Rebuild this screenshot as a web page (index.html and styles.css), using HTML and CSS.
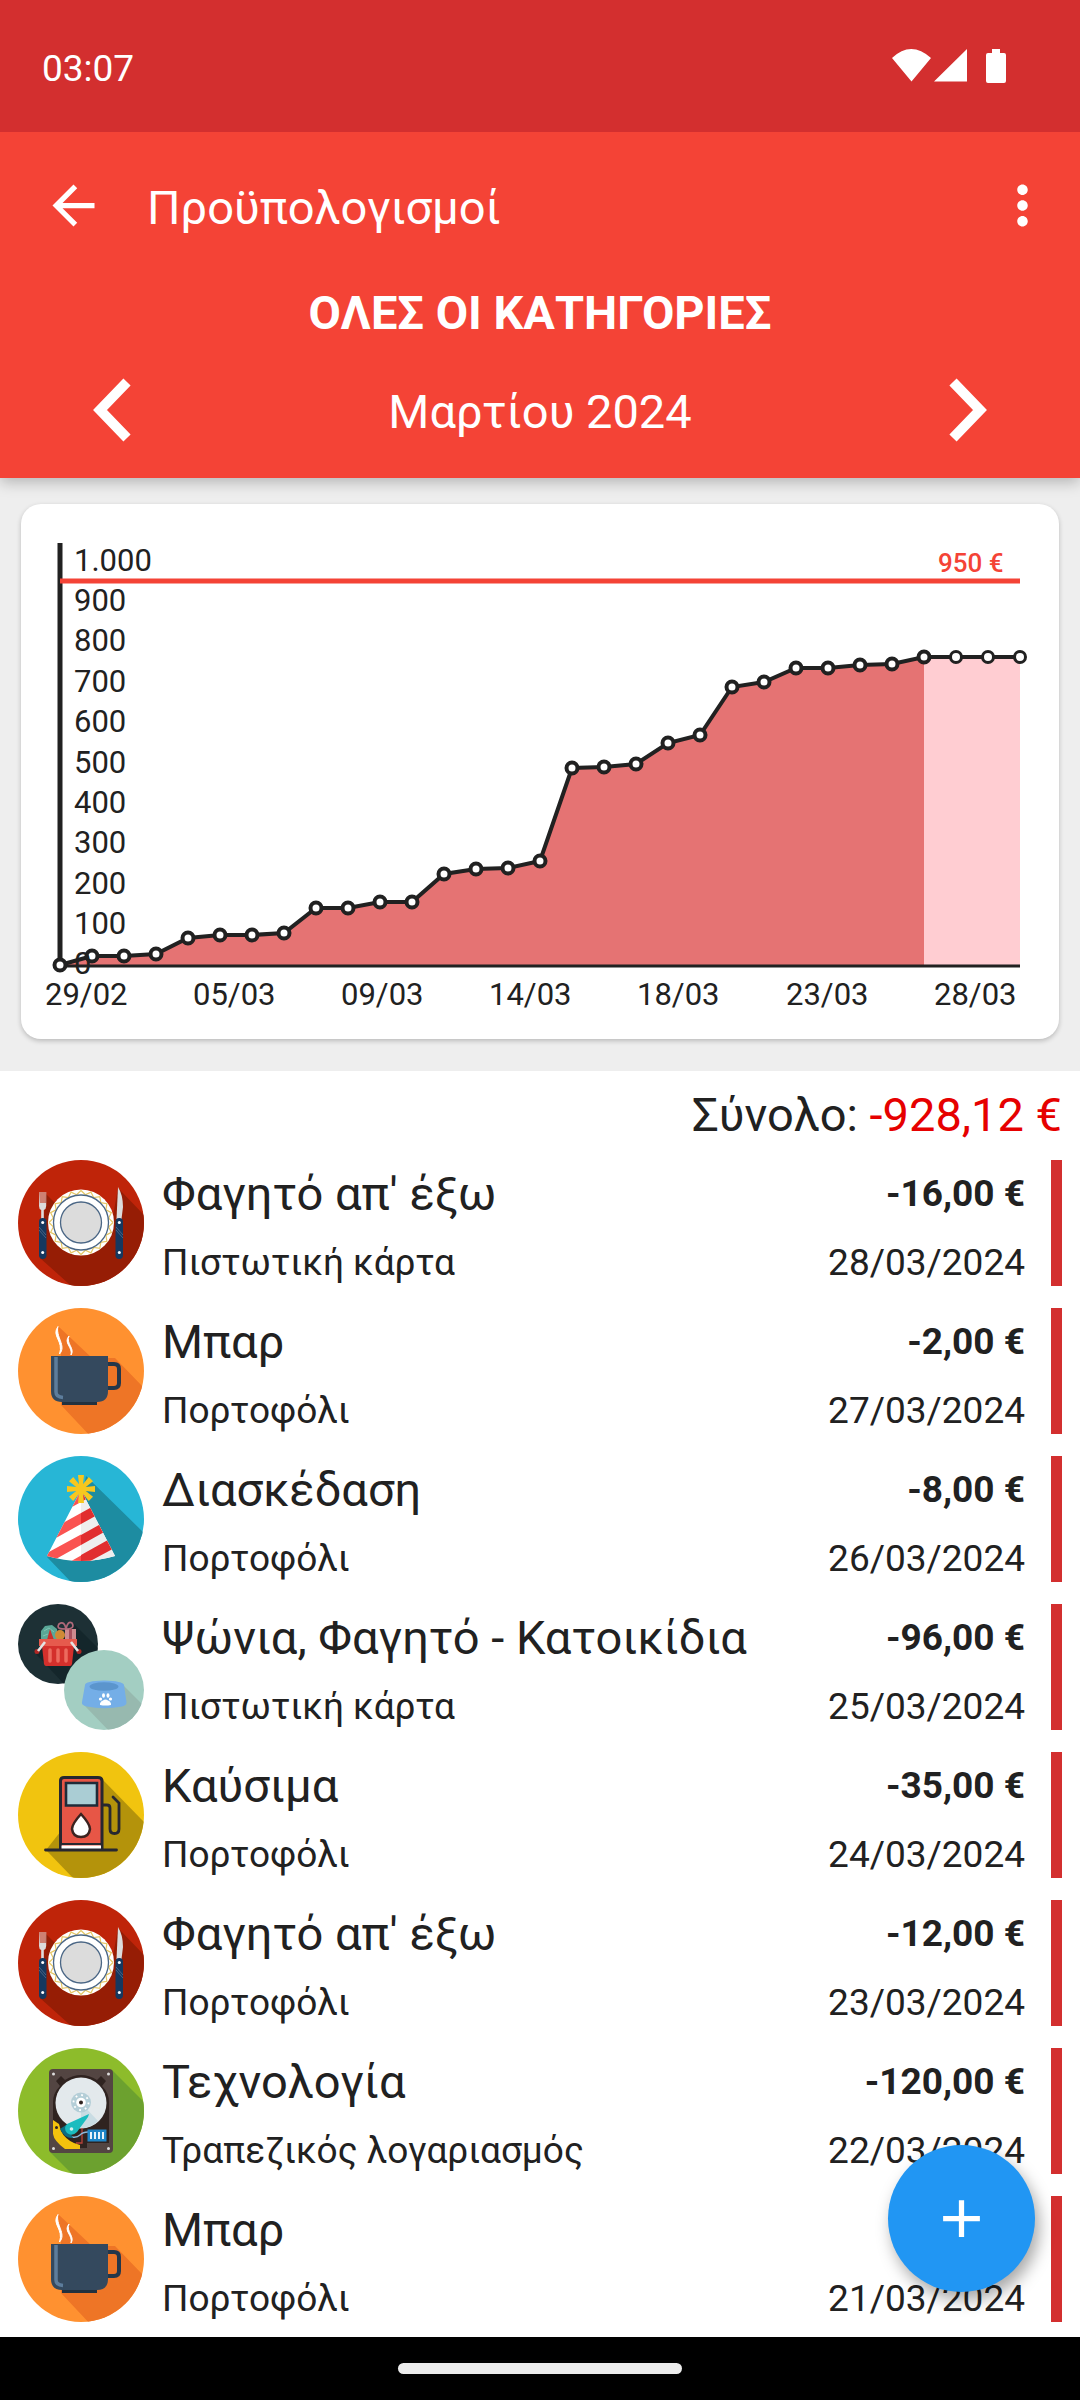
FILE: index.html
```html
<!DOCTYPE html>
<html lang="el">
<head>
<meta charset="UTF-8"/>
<meta name="viewport" content="width=device-width,initial-scale=1.0"/>
<title>Προϋπολογισμοί</title>
<link rel="stylesheet" href="styles.css">
</head>
<body>

<!-- category icons -->
<svg class="sprite" aria-hidden="true">
  <defs>
    <clipPath id="disc"><circle cx="63" cy="63" r="63"/></clipPath>
    <clipPath id="discTop"><circle cx="40" cy="40" r="40"/></clipPath>
    <clipPath id="discBottom"><circle cx="86" cy="86" r="40"/></clipPath>
    <clipPath id="cone"><path d="M63 34 29 100Q63 110 97 100Z"/></clipPath>
    <path id="zigzag" d="M32 0 27.7 4.4 30.4 9.9 24.9 12.7 25.9 18.8 19.8 19.8 18.8 25.9 12.7 24.9 9.9 30.4 4.4 27.7 0 32"/>
    <path id="ray" d="M-1.5 0-3-14H3L1.5 0Z"/>
  </defs>

  <symbol id="food" viewBox="0 0 126 126">
    <g clip-path="url(#disc)">
      <rect width="126" height="126" fill="#bf2409"/>
      <path d="M22 98 28 34 50 56H95L100 28 150 80V150H80Z" fill="#961d05"/>
    </g>
    <circle cx="63" cy="62.5" r="33" fill="#fff"/>
    <g transform="translate(63 62.5)" fill="none" stroke="#e6c766" stroke-width="1.2">
      <use href="#zigzag"/><use href="#zigzag" transform="rotate(90)"/>
      <use href="#zigzag" transform="rotate(180)"/><use href="#zigzag" transform="rotate(270)"/>
    </g>
    <circle cx="63" cy="62.5" r="27.5" fill="#fff" stroke="#4a6685" stroke-width="1.3"/>
    <circle cx="63" cy="62.5" r="20.5" fill="#dcdcdc" stroke="#4a6685" stroke-width="1.3"/>
    <path d="M21.5 32h1v11h1V32h1v11h1V32h1v11h1V32h.7v14q0 3-2.4 4V59h-2.6V50q-2.2-1-2.2-4Z" fill="#dcdcdc"/>
    <path d="M100 27q5 8 5 20l-1.500 12H98.500Z" fill="#dcdcdc"/>
    <rect x="21" y="58" width="7.500" height="41" rx="3.700" fill="#15385f"/>
    <rect x="97.500" y="58" width="7.500" height="41" rx="3.700" fill="#15385f"/>
    <path d="M21 67 28 75M21 70 28 78M98 67 105 75M98 70 105 78" stroke="#55708e" stroke-width=".8"/>
    <g fill="#fff"><circle cx="24.700" cy="62.500" r="1.500"/><circle cx="24.700" cy="92.500" r="1.500"/><circle cx="101.300" cy="62.500" r="1.500"/><circle cx="101.300" cy="92.500" r="1.500"/></g>
  </symbol>

  <symbol id="bar" viewBox="0 0 126 126">
    <g clip-path="url(#disc)">
      <rect width="126" height="126" fill="#ff9130"/>
      <path d="M40 18 74 50H97L130 84V130H74L43 97V44Z" fill="#ee7526"/>
    </g>
    <path d="M40 18.500C33 28 46 33 41.500 46 49 38 37 28 40 18.500ZM51 28C45 35 55 39 53 47 57.500 41 47.500 35 51 28Z" fill="#fff" stroke="#fff"/>
    <path d="M89 56h7q5 0 5 5v14q0 5-5 5h-7" fill="none" stroke="#24374a" stroke-width="4"/>
    <path d="M44 92H79V97H44Z" fill="#22313f"/>
    <path d="M33 48H90V83Q90 94 79 94H44Q33 94 33 83Z" fill="#34495e"/>
    <path d="M38 49V84Q38 89 45 89.500" fill="none" stroke="#5d7d9c" stroke-width="3.500"/>
  </symbol>

  <symbol id="fun" viewBox="0 0 126 126">
    <g clip-path="url(#disc)">
      <rect width="126" height="126" fill="#27b6d6"/>
      <path d="M68 20 126 77V126H53L29 101 60 60Z" fill="#1d8ca1"/>
    </g>
    <g clip-path="url(#cone)">
      <rect x="28" y="30" width="70" height="80" fill="#fff"/>
      <path d="M20 55 106 8V22L20 70ZM20 81 106 33V44L20 92ZM20 102 106 55V65L20 113ZM20 124 106 75V87L20 134Z" fill="#fa5351"/>
      <path d="M63 30H98V110H63Z" fill="#eee"/>
      <path d="M63 31 106 8V22L63 46ZM63 57 106 33V44L63 68ZM63 79 106 55V65L63 89ZM63 99 106 75V87L63 110Z" fill="#e12e2f"/>
    </g>
    <g transform="translate(63 33)" fill="#f7c71f">
      <use href="#ray"/><use href="#ray" transform="rotate(45)"/><use href="#ray" transform="rotate(90)"/><use href="#ray" transform="rotate(135)"/>
      <use href="#ray" transform="rotate(180)"/><use href="#ray" transform="rotate(225)"/><use href="#ray" transform="rotate(270)"/><use href="#ray" transform="rotate(315)"/>
      <circle r="5"/>
    </g>
  </symbol>

  <symbol id="shopping" viewBox="0 0 126 126">
    <g clip-path="url(#discTop)">
      <rect width="80" height="80" fill="#1d3035"/>
      <path d="M56 20 80 44V80H46L18 50Z" fill="#14262b"/>
    </g>
    <path d="M23 35V27l4-5 7-1 5 4v10Z" fill="#5aa797"/>
    <path d="m26 27 5-3 5 4M25 32l5-2" fill="none" stroke="#7fc4b3"/>
    <path d="M32 25 36 36H29Z" fill="#c9302c"/>
    <circle cx="42" cy="31" r="5" fill="#d08a35"/>
    <path d="M47 25H58V36H47Z" fill="#cf8a8f"/>
    <path d="M51 25h3V36h-3Z" fill="#a8505e"/>
    <path d="M48 25C43 25 38 25 41 20 45 17 47 20 48 25 49 20 51 17 54 19 57 24 52 25 48 25Z" fill="none" stroke="#b0697a" stroke-width="1.700"/>
    <path d="M24 42H56L54 60Q53.500 62 52 62H28Q26.500 62 26 60Z" fill="#d4302c"/>
    <path d="M21 35H59V42H21Z" fill="#e65a4d"/>
    <path d="M32 46v11M40 46v11M48 46v11" stroke="#ec6a5e" stroke-width="3.500" stroke-linecap="round"/>
    <circle cx="19" cy="47.500" r="2.500" fill="#b02724"/><circle cx="61" cy="47.500" r="2.500" fill="#b02724"/>
    <path d="M27 38 20 47M53 38 60 47" stroke="#e4e4e4" stroke-width="2.600"/>
    <g clip-path="url(#discBottom)">
      <rect x="46" y="46" width="80" height="80" fill="#a3cec2"/>
      <path d="M104 80 130 106V130H94L66 101Z" fill="#97b9af"/>
    </g>
    <path d="M67 81Q67 77 86 76.500 105 77 106 81L108.500 98Q109 101 104 102.500 86 106 69 102.500 63 101 64 98Z" fill="#74aee7"/>
    <ellipse cx="86" cy="82.500" rx="14.500" ry="4.300" fill="#5b95cd"/>
    <path d="M82 101Q81.500 98 85 96.500 87.500 94.500 90 96.500 93.500 98 93 101 87.500 102 82 101Z" fill="#fff"/>
    <g fill="#fff"><ellipse cx="85.500" cy="91.500" rx="1.500" ry="2.200"/><ellipse cx="90" cy="91.500" rx="1.500" ry="2.200"/><circle cx="82.500" cy="95" r="1.600"/><circle cx="92.500" cy="95" r="1.600"/></g>
  </symbol>

  <symbol id="fuel" viewBox="0 0 126 126">
    <g clip-path="url(#disc)">
      <rect width="126" height="126" fill="#f1c40f"/>
      <path d="M84 27 126 70V126H55L28 98Z" fill="#b4930b"/>
    </g>
    <path d="M42.500 96V29Q42.500 25.500 46 25.500H80Q84 25.500 84 29V96Z" fill="#e75646" stroke="#272730" stroke-width="3"/>
    <path d="M43.500 93.500H83V97H43.500Z" fill="#fff"/>
    <path d="M42 92H84" stroke="#272730" stroke-width="2"/>
    <path d="M48 31H79V53.500H48Z" fill="#aacdd4" stroke="#1f2b38" stroke-width="2.600"/>
    <path d="M63 62Q54 72 54 77 55 85 63 85 71 85 72 77 72 72 63 62Z" fill="#fff" stroke="#3b2320" stroke-width="2.500"/>
    <path d="M27.500 98H98.500M85 53h4q3 0 3 3v21q0 4.500 4.500 4.500 4.500 0 4.500-4.500V51L95 45" fill="none" stroke="#272730" stroke-width="2.800" stroke-linecap="round"/>
  </symbol>

  <symbol id="tech" viewBox="0 0 126 126">
    <g clip-path="url(#disc)">
      <rect width="126" height="126" fill="#8dbc2b"/>
      <path d="M94 22 126 54V126H54L32 104Z" fill="#6ca12f"/>
    </g>
    <rect x="31" y="21" width="64" height="84" rx="4" fill="#534542"/>
    <path d="m38 33 5-5 4 4Q63 22 79 32l4-4 5 5-4 5Q91 45 91 54V95H69V100H48L35 86V54Q35 45 42 38Z" fill="#2f2320"/>
    <circle cx="63" cy="55" r="25.500" fill="#e3e9ec"/>
    <path d="M63 55 80 73Q73 80 63 80.500Z" fill="#c9dce3"/>
    <circle cx="63" cy="54.500" r="10" fill="#b4ced7"/>
    <circle cx="63" cy="54.500" r="7.500" fill="none" stroke="#fff" stroke-width="1.800" stroke-dasharray="1.800 4.090"/>
    <circle cx="63" cy="54.500" r="4.800" fill="#fff"/><circle cx="63" cy="54.500" r="2" fill="#2f2320"/>
    <path d="M64 80V95H58" fill="none" stroke="#b8433b" stroke-width="1.300"/>
    <path d="M54 89q5 1 8-2t8-3" fill="none" stroke="#8bb8dc" stroke-width="1.300"/>
    <path d="M35 72 41 76 43 83Q47 91 56 95L62 97V101H47Q36 93 35 86Z" fill="#f4c20d"/>
    <circle cx="38.500" cy="79.500" r="1.500" fill="#2f2320"/>
    <path d="M42 81 48 77 55 90Q47 91 42 81Z" fill="#0d6d80"/>
    <path d="M49 76 71 66 70 69 59 84Q54 89 49 85 45 80 49 76Z" fill="#1bbcbf"/>
    <circle cx="53.500" cy="81" r="1.800" fill="#d7f2f2"/>
    <rect x="69.500" y="81.500" width="19" height="12" fill="#1e86c8"/>
    <path d="M73 84v7M77 84v7M81 84v7M85 84v7" stroke="#fff" stroke-width="1.800"/>
    <g fill="#ddd"><circle cx="35.500" cy="26" r="1.500"/><circle cx="90.500" cy="26" r="1.500"/><circle cx="35.500" cy="100.500" r="1.500"/><circle cx="90.500" cy="100.500" r="1.500"/></g>
  </symbol>
</svg>

<div class="status-bar">
  <time>03:07</time>
  <svg class="status-icons" viewBox="0 0 114 34" aria-hidden="true">
    <path d="M0 9Q19-9 39 9L19.500 32.500ZM42 32.500 75 0V32.500ZM100 0h8v4h4q2 0 2 2V32q0 2-2 2H96q-2 0-2-2V6q0-2 2-2h4Z"/>
  </svg>
</div>

<header class="header">
  <div class="toolbar">
    <button class="icon-btn" aria-label="Πίσω"><svg viewBox="0 0 24 24"><path d="M20 11H7.830l5.590-5.590L12 4l-8 8 8 8 1.410-1.410L7.830 13H20v-2z"/></svg></button>
    <h1 class="title">Προϋπολογισμοί</h1>
    <button class="icon-btn more" aria-label="Περισσότερα"><svg viewBox="0 0 24 24"><path d="M12 8c1.100 0 2-.9 2-2s-.9-2-2-2-2 .9-2 2 .9 2 2 2zm0 2c-1.100 0-2 .9-2 2s.9 2 2 2 2-.9 2-2-.9-2-2-2zm0 6c-1.100 0-2 .9-2 2s.9 2 2 2 2-.9 2-2-.9-2-2-2z"/></svg></button>
  </div>
  <h2 class="category">ΟΛΕΣ ΟΙ ΚΑΤΗΓΟΡΙΕΣ</h2>
  <div class="period">
    <button class="arrow" aria-label="Προηγούμενος μήνας"><svg viewBox="0 0 40 64"><path d="M35 4 8 32 35 60"/></svg></button>
    <span class="month">Μαρτίου 2024</span>
    <button class="arrow" aria-label="Επόμενος μήνας"><svg viewBox="0 0 40 64"><path d="M5 4 32 32 5 60"/></svg></button>
  </div>
</header>

<section class="chart-section">
  <div class="card">
    <svg class="chart" viewBox="0 0 1038 535" role="img" aria-label="Έξοδα ανά ημέρα">
      <path class="area" d="M39 461 71 452 103 452 135 450 167 434 199 431 231 431 263 429 295 404 327 404 359 398 391 398 423 370 455 365 487 364 519 357 551 264 583 263 615 260 647 239 679 231 711 183 743 178 775 164 807 164 839 161 871 160 903 153V462H39Z"/>
      <path class="area-future" d="M903 153H999V462H903Z"/>
      <path class="axis-x" d="M39 462H999"/>
      <path class="axis-y" d="M39 39V462"/>
      <path class="limit" d="M39 77H999"/>
      <polyline class="line" points="39,461 71,452 103,452 135,450 167,434 199,431 231,431 263,429 295,404 327,404 359,398 391,398 423,370 455,365 487,364 519,357 551,264 583,263 615,260 647,239 679,231 711,183 743,178 775,164 807,164 839,161 871,160 903,153 999,153"/>
      <g class="dots">
        <circle cx="39" cy="461" r="5.500"/><circle cx="71" cy="452" r="5.500"/><circle cx="103" cy="452" r="5.500"/><circle cx="135" cy="450" r="5.500"/>
        <circle cx="167" cy="434" r="5.500"/><circle cx="199" cy="431" r="5.500"/><circle cx="231" cy="431" r="5.500"/><circle cx="263" cy="429" r="5.500"/>
        <circle cx="295" cy="404" r="5.500"/><circle cx="327" cy="404" r="5.500"/><circle cx="359" cy="398" r="5.500"/><circle cx="391" cy="398" r="5.500"/>
        <circle cx="423" cy="370" r="5.500"/><circle cx="455" cy="365" r="5.500"/><circle cx="487" cy="364" r="5.500"/><circle cx="519" cy="357" r="5.500"/>
        <circle cx="551" cy="264" r="5.500"/><circle cx="583" cy="263" r="5.500"/><circle cx="615" cy="260" r="5.500"/><circle cx="647" cy="239" r="5.500"/>
        <circle cx="679" cy="231" r="5.500"/><circle cx="711" cy="183" r="5.500"/><circle cx="743" cy="178" r="5.500"/><circle cx="775" cy="164" r="5.500"/>
        <circle cx="807" cy="164" r="5.500"/><circle cx="839" cy="161" r="5.500"/><circle cx="871" cy="160" r="5.500"/><circle cx="903" cy="153" r="5.500"/>
      </g>
      <g class="dots future"><circle cx="935" cy="153" r="5.500"/><circle cx="967" cy="153" r="5.500"/><circle cx="999" cy="153" r="5.500"/></g>
      <g class="labels">
        <text x="53" y="67">1.000</text><text x="53" y="107">900</text><text x="53" y="147">800</text><text x="53" y="188">700</text>
        <text x="53" y="228">600</text><text x="53" y="269">500</text><text x="53" y="309">400</text><text x="53" y="349">300</text>
        <text x="53" y="390">200</text><text x="53" y="430">100</text><text x="53" y="470">0</text>
        <text x="24" y="501">29/02</text><text x="172" y="501">05/03</text><text x="320" y="501">09/03</text><text x="468" y="501">14/03</text>
        <text x="616" y="501">18/03</text><text x="765" y="501">23/03</text><text x="913" y="501">28/03</text>
      </g>
      <text class="limit-label" x="917" y="68">950 €</text>
    </svg>
  </div>
</section>

<main class="content">
  <p class="total">Σύνολο: <span class="negative">-928,12 €</span></p>
  <ul class="list">
    <li class="item">
      <svg class="icon" aria-hidden="true"><use href="#food"/></svg>
      <div class="main"><span class="name">Φαγητό απ' έξω</span><span class="sub">Πιστωτική κάρτα</span></div>
      <div class="side"><span class="amount">-16,00 €</span><span class="sub">28/03/2024</span></div>
    </li>
    <li class="item">
      <svg class="icon" aria-hidden="true"><use href="#bar"/></svg>
      <div class="main"><span class="name">Μπαρ</span><span class="sub">Πορτοφόλι</span></div>
      <div class="side"><span class="amount">-2,00 €</span><span class="sub">27/03/2024</span></div>
    </li>
    <li class="item">
      <svg class="icon" aria-hidden="true"><use href="#fun"/></svg>
      <div class="main"><span class="name">Διασκέδαση</span><span class="sub">Πορτοφόλι</span></div>
      <div class="side"><span class="amount">-8,00 €</span><span class="sub">26/03/2024</span></div>
    </li>
    <li class="item">
      <svg class="icon" aria-hidden="true"><use href="#shopping"/></svg>
      <div class="main"><span class="name">Ψώνια, Φαγητό - Κατοικίδια</span><span class="sub">Πιστωτική κάρτα</span></div>
      <div class="side"><span class="amount">-96,00 €</span><span class="sub">25/03/2024</span></div>
    </li>
    <li class="item">
      <svg class="icon" aria-hidden="true"><use href="#fuel"/></svg>
      <div class="main"><span class="name">Καύσιμα</span><span class="sub">Πορτοφόλι</span></div>
      <div class="side"><span class="amount">-35,00 €</span><span class="sub">24/03/2024</span></div>
    </li>
    <li class="item">
      <svg class="icon" aria-hidden="true"><use href="#food"/></svg>
      <div class="main"><span class="name">Φαγητό απ' έξω</span><span class="sub">Πορτοφόλι</span></div>
      <div class="side"><span class="amount">-12,00 €</span><span class="sub">23/03/2024</span></div>
    </li>
    <li class="item">
      <svg class="icon" aria-hidden="true"><use href="#tech"/></svg>
      <div class="main"><span class="name">Τεχνολογία</span><span class="sub">Τραπεζικός λογαριασμός</span></div>
      <div class="side"><span class="amount">-120,00 €</span><span class="sub">22/03/2024</span></div>
    </li>
    <li class="item">
      <svg class="icon" aria-hidden="true"><use href="#bar"/></svg>
      <div class="main"><span class="name">Μπαρ</span><span class="sub">Πορτοφόλι</span></div>
      <div class="side"><span class="amount">-2,00 €</span><span class="sub">21/03/2024</span></div>
    </li>
  </ul>
</main>

<button class="fab" aria-label="Προσθήκη"><svg viewBox="0 0 24 24"><path d="M19 13h-6v6h-2v-6H5v-2h6V5h2v6h6v2z"/></svg></button>

<div class="nav-bar"><div class="pill"></div></div>

</body>
</html>
```
FILE: styles.css
```css
*{margin:0;padding:0;box-sizing:border-box}
body{
  min-height:100vh;display:flex;flex-direction:column;
  background:#fff;color:#212121;font-family:Roboto,"Noto Sans",sans-serif
}
button{border:none;background:none;color:inherit;cursor:pointer}
svg{display:block}
.sprite{position:absolute;width:0;height:0}

/* ---------- status bar ---------- */
.status-bar{
  position:relative;z-index:2;
  height:132px;padding:0 74px 0 42px;background:#d32f2f;color:#fff;
  display:flex;align-items:center;justify-content:space-between;font-size:37px
}
.status-bar time{padding-top:4px}
.status-icons{width:114px;height:34px;fill:#fff}

/* ---------- header ---------- */
.header{
  position:relative;z-index:1;background:#f44336;color:#fff;font-size:47px;line-height:56px;
  box-shadow:0 4px 14px rgba(0,0,0,.25)
}
.toolbar{height:147px;display:flex;align-items:center;padding:0 26px 0 42px}
.icon-btn svg{width:63px;height:63px;fill:#fff}
.title{flex:1;padding:4px 0 0 42px;font-size:47px;font-weight:400}
.category{margin-top:6px;font-size:47px;font-weight:700;text-align:center}
.period{height:137px;padding:0 92px;display:flex;align-items:center;justify-content:space-between}
.month{padding-top:4px}
.arrow svg{width:40px;height:64px;fill:none;stroke:#fff;stroke-width:10}

/* ---------- chart ---------- */
.chart-section{padding:26px 21px 32px;background:#eee}
.card{background:#fff;border-radius:20px;box-shadow:0 2px 5px rgba(0,0,0,.22)}
.chart{width:100%;height:auto}
.area{fill:#e57373}
.area-future{fill:#ffcdd2}
.axis-x{stroke:#212121;stroke-width:3}
.axis-y{stroke:#212121;stroke-width:5}
.limit{stroke:#f44336;stroke-width:5}
.line{fill:none;stroke:#212121;stroke-width:4}
.dots{fill:#fff;stroke:#212121;stroke-width:4}
.dots.future{stroke-width:3}
.labels{fill:#212121;font-size:31px}
.limit-label{fill:#f44336;font-size:26px;font-weight:500}

/* ---------- transactions ---------- */
.content{flex:1}
.total{padding:16px 18px 17px;text-align:right;font-size:47px;line-height:56px}
.negative{color:#e60000}
.list{list-style:none;padding:0 18px 15px;display:flex;flex-direction:column;gap:22px}
.item{display:flex;align-items:stretch;gap:18px;border-right:11px solid #d32f2f;padding-right:26px}
.icon{width:126px;height:126px;flex:none}
.main,.side{display:flex;flex-direction:column;justify-content:space-between}
.main{flex:1;padding:6px 0 1px}
.side{padding:12px 0 1px;text-align:right}
.name{font-size:47px;line-height:56px}
.sub,.amount{font-size:37px;line-height:44px}
.amount{font-weight:700}

/* ---------- floating button ---------- */
.fab{
  position:fixed;right:45px;bottom:108px;width:147px;height:147px;border-radius:50%;
  display:flex;align-items:center;justify-content:center;background:#2196f3;
  box-shadow:4px 8px 16px rgba(0,0,0,.35)
}
.fab svg{width:63px;height:63px;fill:#fff}

/* ---------- gesture bar ---------- */
.nav-bar{height:63px;background:#000;display:flex;align-items:center;justify-content:center}
.pill{width:284px;height:11px;border-radius:6px;background:#ececec}
```
